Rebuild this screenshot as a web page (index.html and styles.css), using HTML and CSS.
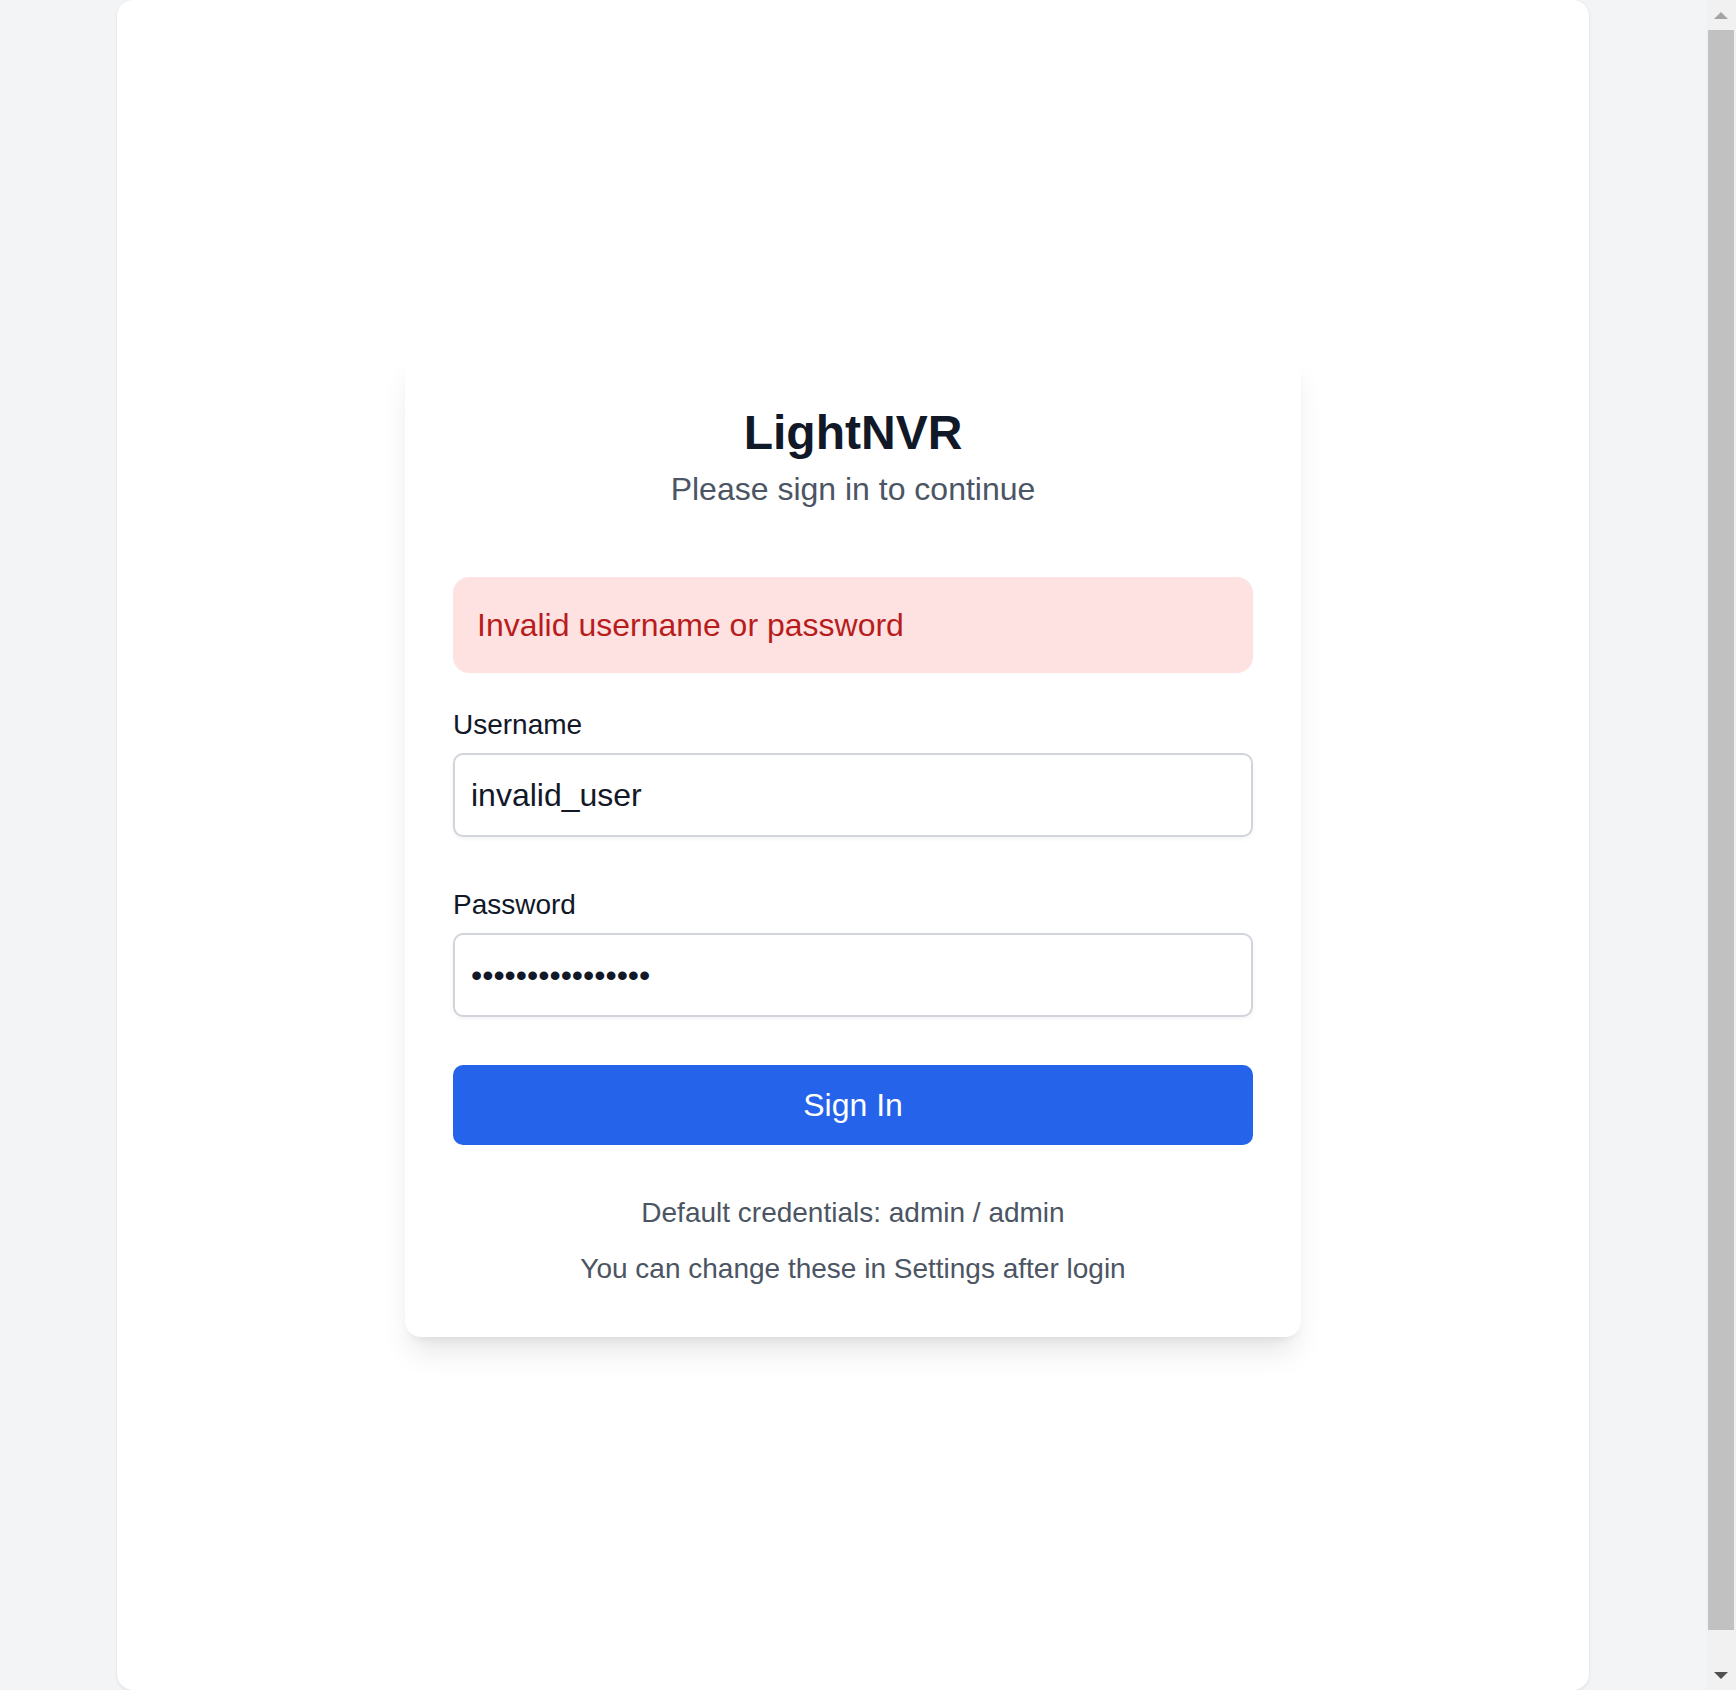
FILE: index.html
```html
<!DOCTYPE html>
<html lang="en">
<head>
<meta charset="utf-8">
<title>LightNVR - Login</title>
<link rel="stylesheet" href="styles.css">
</head>
<body>
<div class="page">
  <main class="panel">
    <div class="card">
      <header class="card-header">
        <h1 class="title">LightNVR</h1>
        <p class="subtitle">Please sign in to continue</p>
      </header>
      <div class="alert">Invalid username or password</div>
      <form class="form">
        <div class="field">
          <label class="label" for="username">Username</label>
          <input class="input" id="username" type="text" value="invalid_user">
        </div>
        <div class="field">
          <label class="label" for="password">Password</label>
          <input class="input" id="password" type="password" value="wrongpassword123">
        </div>
        <button class="btn" type="button">Sign In</button>
      </form>
      <div class="hint">
        <p class="hint-line">Default credentials: admin / admin</p>
        <p class="hint-line hint-gap">You can change these in Settings after login</p>
      </div>
    </div>
  </main>
</div>
<div class="scrollbar" aria-hidden="true">
  <div class="sb-btn"><span class="sb-arrow-up"></span></div>
  <div class="sb-track"><div class="sb-thumb"></div></div>
  <div class="sb-btn"><span class="sb-arrow-down"></span></div>
</div>
</body>
</html>
```

FILE: styles.css
```css
html, body {
  margin: 0;
  padding: 0;
}
html {
  overflow: hidden;
}
body {
  background: #f3f4f6;
  font-family: "Liberation Sans", Arial, sans-serif;
  color: #111827;
}
.page {
  margin-right: 30px;
}
.panel {
  width: 1472px;
  min-height: 1690px;
  margin: 0 auto;
  background: #ffffff;
  border-radius: 16px;
  box-shadow: 0 2px 4px rgba(0, 0, 0, 0.06), 0 0 2px rgba(0, 0, 0, 0.06);
  display: flex;
  align-items: center;
  justify-content: center;
}
.card {
  width: 896px;
  box-sizing: border-box;
  padding: 48px;
  background: #ffffff;
  border-radius: 16px;
  box-shadow: 0 20px 30px -6px rgba(0, 0, 0, 0.1), 0 8px 12px -8px rgba(0, 0, 0, 0.1);
}
.card-header {
  text-align: center;
  margin-bottom: 64px;
}
.title {
  margin: 0;
  font-size: 48px;
  line-height: 64px;
  font-weight: 700;
  color: #111827;
}
.subtitle {
  margin: 0;
  font-size: 32px;
  line-height: 48px;
  color: #4b5563;
}
.alert {
  background: #fee2e2;
  color: #b91c1c;
  border-radius: 16px;
  padding: 24px;
  font-size: 32px;
  line-height: 48px;
  margin-bottom: 32px;
}
.form {
  display: flex;
  flex-direction: column;
  gap: 48px;
}
.field {
  display: flex;
  flex-direction: column;
  gap: 8px;
}
.label {
  font-size: 28px;
  line-height: 40px;
  color: #111827;
}
.input {
  box-sizing: border-box;
  height: 84px;
  margin: 0;
  padding: 16px 16px;
  border: 2px solid #d1d5db;
  border-radius: 10px;
  font-family: "Liberation Sans", Arial, sans-serif;
  font-size: 32px;
  line-height: 48px;
  color: #111827;
  background: #ffffff;
  box-shadow: 0 2px 4px rgba(0, 0, 0, 0.05);
  outline: none;
}
.btn {
  height: 80px;
  border: none;
  border-radius: 10px;
  background: #2563eb;
  color: #ffffff;
  font-family: "Liberation Sans", Arial, sans-serif;
  font-size: 32px;
  line-height: 48px;
  cursor: pointer;
}
.hint {
  margin-top: 48px;
  text-align: center;
}
.hint-line {
  margin: 0;
  font-size: 28px;
  line-height: 40px;
  color: #4b5563;
}
.hint-gap {
  margin-top: 16px;
}

/* scrollbar drawn as an overlay on the right edge */
.scrollbar {
  position: fixed;
  top: 0;
  right: 0;
  width: 30px;
  height: 100vh;
  background: #f1f1f1;
  display: flex;
  flex-direction: column;
}
.sb-btn {
  height: 30px;
  flex: none;
  display: flex;
  align-items: center;
  justify-content: center;
}
.sb-arrow-up {
  width: 0;
  height: 0;
  border-left: 7px solid transparent;
  border-right: 7px solid transparent;
  border-bottom: 7px solid #a3a3a3;
}
.sb-arrow-down {
  width: 0;
  height: 0;
  border-left: 7px solid transparent;
  border-right: 7px solid transparent;
  border-top: 7px solid #505050;
}
.sb-track {
  flex: 1;
  padding: 0 2px;
}
.sb-thumb {
  height: 1600px;
  background: #c1c1c1;
}
```
